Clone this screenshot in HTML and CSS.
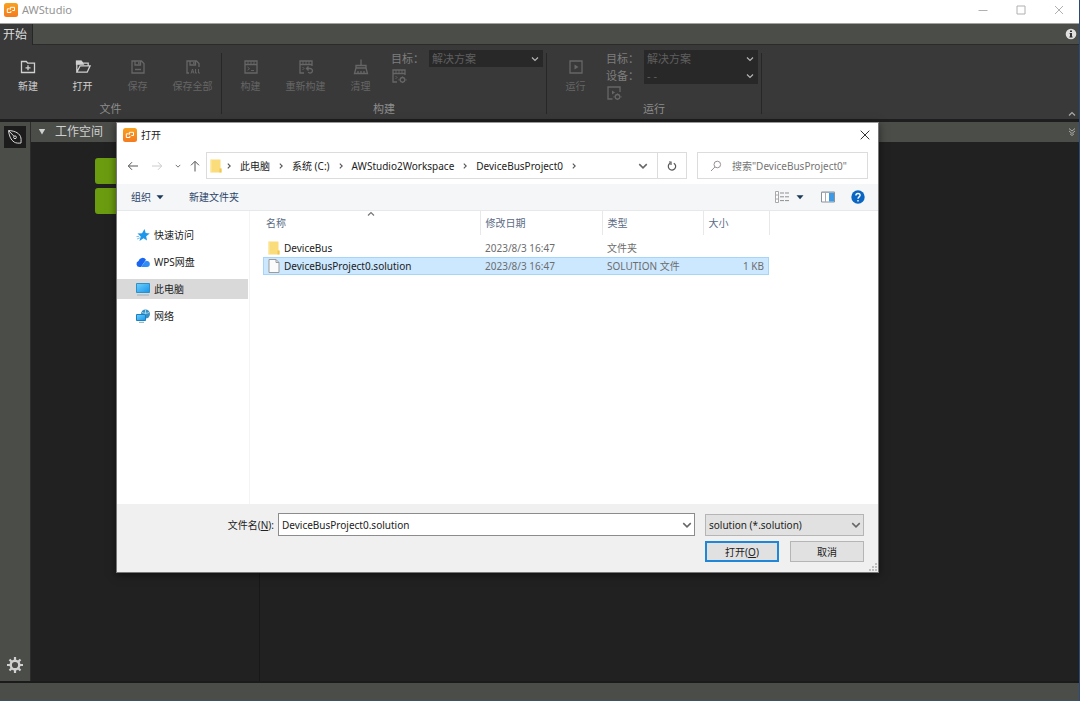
FILE: index.html
```html
<!DOCTYPE html>
<html lang="zh-CN">
<head>
<meta charset="utf-8">
<title>AWStudio</title>
<link rel="stylesheet" href="styles.css">
</head>
<body>
<svg class="defs" width="0" height="0" aria-hidden="true">
  <defs>
    <linearGradient id="orange" x1="0" y1="0" x2="0" y2="1"><stop offset="0" stop-color="#f9a11d"/><stop offset="1" stop-color="#f47b20"/></linearGradient>
    <linearGradient id="sky" x1="0" y1="0" x2="1" y2="1"><stop offset="0" stop-color="#6fd0fb"/><stop offset="1" stop-color="#1795ec"/></linearGradient>
  </defs>
  <symbol id="logo" viewBox="0 0 14 14"><rect width="14" height="14" rx="2.5" fill="url(#orange)"/><path d="M5.600 5.800H3.300v3.700h3.600V8M6.300 6.800V4.300h4.200v3.200H8.300" fill="none" stroke="#fff" stroke-width="1"/></symbol>
  <symbol id="chev" viewBox="0 0 8 8"><path d="M1 2.500l3 3 3-3" fill="none" stroke="currentColor" stroke-width="1.200"/></symbol>
  <symbol id="right" viewBox="0 0 8 8"><path d="M2.800 1.600L5.200 4 2.800 6.400" fill="none" stroke="currentColor" stroke-width="1.100"/></symbol>
  <symbol id="folder" viewBox="0 0 12 14"><path d="M.5.5h10v9h1v4H.5z" fill="#fbdc7b"/><path d="M9.500 9.500h2v4h-2z" fill="#f0c650"/><path d="M.5.5h1v13h-1z" fill="#fce9a6"/></symbol>
</svg>

<header class="titlebar">
  <svg class="i14"><use href="#logo"/></svg>
  <span class="titlebar-name">AWStudio</span>
  <button class="win-btn" aria-label="最小化"><svg class="i10" viewBox="0 0 10 10"><path d="M.5 5.500h9"/></svg></button>
  <button class="win-btn" aria-label="最大化"><svg class="i10" viewBox="0 0 10 10"><path d="M1 1h8v8H1z"/></svg></button>
  <button class="win-btn" aria-label="关闭"><svg class="i10" viewBox="0 0 10 10"><path d="M1 1l8 8M9 1L1 9"/></svg></button>
</header>

<nav class="tabs">
  <button class="tab">开始</button>
  <button class="info" aria-label="信息"><svg class="i12" viewBox="0 0 12 12"><circle cx="6" cy="6" r="5.300" fill="#e0e0e0"/><path d="M5 2.400h2v1.500H5zM4.600 5H7v3.600h.6v1H4.400v-1H5V6h-.4z" fill="#333"/></svg></button>
</nav>

<section class="ribbon">
  <div class="group">
    <div class="group-body">
      <button class="tool first on"><svg class="i16" viewBox="0 0 16 16"><path d="M1.500 2.500h4.800l1.400 1.700h6.800v9.300h-13zM8 6.300v5M5.500 8.800h5"/></svg>新建</button>
      <button class="tool on"><svg class="i16" viewBox="0 0 16 16"><path d="M1.800 13.200V2.500h4.400l1.400 1.700h5.600v2.500M1.800 13.200l3.300-6.400h10l-2.900 6.400z"/><path d="M1.500 2.200h4.700l2 3H1.500z" fill="currentColor"/></svg>打开</button>
      <button class="tool"><svg class="i16" viewBox="0 0 16 16"><path d="M2 2h9.500L14 4.500V14H2zM5 2v4h5.500V2M8.800 3v2M5 10.500h6"/></svg>保存</button>
      <button class="tool"><svg class="i16" viewBox="0 0 16 16"><path d="M4 14H2V2h9.500L14 4.500V8M5 2v4h5.500V2M8.800 3v2"/><path d="M6 14.500l1.500-4.500L9 14.500M6.500 13h2M10.500 10v4H12M13.500 10v4H15" stroke-width=".9"/></svg>保存全部</button>
    </div>
    <div class="group-name">文件</div>
  </div>
  <div class="group">
    <div class="group-body">
      <button class="tool"><svg class="i16" viewBox="0 0 16 16"><path d="M2 2h12v12H2zM2 5.500h12"/><path d="M5 2v3M8 2v3M11 2v3M4.500 8l2 1.600-2 1.600M8 11.500h3" stroke-width=".9"/></svg>构建</button>
      <button class="tool"><svg class="i16" viewBox="0 0 16 16"><path d="M6 14H2V2h12v5M2 5.500h12M9 9.500h3.200a2.300 2.300 0 1 1-2 3.500M10.500 7.500l-2 2 2 2"/><path d="M5 2v3M8 2v3M11 2v3M4.500 8l1.500 1.500-1.500 1.500" stroke-width=".9"/></svg>重新构建</button>
      <button class="tool"><svg class="i16" viewBox="0 0 16 16"><path d="M8 .5V6M3 9V6.500h10V9M3 9L1.500 14.500h13L13 9zM5 14.500V12M8 14.500V12M11 14.500V12"/></svg>清理</button>
      <div class="fields">
        <label for="t1">目标：</label>
        <div class="combo dark"><select id="t1"><option>解决方案</option></select><svg class="i8"><use href="#chev"/></svg></div>
        <button class="mini" aria-label="构建设置"><svg class="i16" viewBox="0 0 16 16"><path d="M6 14H2V2h12v5M2 5.500h12M11.500 8.500v1M11.500 14v1M8.500 11.800h-1M15.500 11.800h-1"/><path d="M5 2v3M8 2v3M11 2v3M4.500 8l1.500 1.500-1.500 1.500" stroke-width=".9"/><circle cx="11.500" cy="11.800" r="2.300"/></svg></button>
      </div>
    </div>
    <div class="group-name">构建</div>
  </div>
  <div class="group">
    <div class="group-body">
      <button class="tool"><svg class="i16" viewBox="0 0 16 16"><path d="M2 2h12v12H2z"/><path d="M6.500 5.500v5l4-2.500z" fill="currentColor" stroke="none"/></svg>运行</button>
      <div class="fields">
        <label for="t2">目标：</label>
        <div class="combo dark"><select id="t2"><option>解决方案</option></select><svg class="i8"><use href="#chev"/></svg></div>
        <label for="t3">设备：</label>
        <div class="combo dark"><select id="t3"><option>- -</option></select><svg class="i8"><use href="#chev"/></svg></div>
        <button class="mini" aria-label="运行设置"><svg class="i16" viewBox="0 0 16 16"><path d="M6.500 14H2V2h12v5M11.500 8.500v1M11.500 14v1M8.500 11.800h-1M15.500 11.800h-1"/><path d="M6 5.500v4l3-2z" fill="currentColor" stroke="none"/><circle cx="11.500" cy="11.800" r="2.300"/></svg></button>
      </div>
    </div>
    <div class="group-name">运行</div>
  </div>
  <button class="collapse" aria-label="折叠功能区"><svg class="i8 flip"><use href="#chev"/></svg></button>
</section>

<main class="work">
  <aside class="rail">
    <button class="pen" aria-label="设计"><svg class="i16" viewBox="0 0 16 16"><path d="M1.500 1.500C6 1.800 11.500 3 13.500 7.500c.8 2 .6 4 .5 6.500-2.500.3-5 .2-6.800-.9C3.500 11 2 6 1.500 1.500zM2 2l5 5.300"/><circle cx="8" cy="8.300" r="1.400"/></svg></button>
    <button class="gear" aria-label="设置"><svg class="i16" viewBox="0 0 16 16"><circle cx="8" cy="8" r="4.300" stroke-width="2.400"/><path d="M8 0v3M8 13v3M0 8h3M13 8h3M2.500 2.500l2 2M11.500 11.500l2 2M13.500 2.500l-2 2M4.500 11.500l-2 2" stroke-width="2.200"/></svg></button>
  </aside>
  <section class="panel">
    <h2 class="panel-head"><svg class="i8" viewBox="0 0 8 8"><path d="M.8 1h6.400L4 6.500z" fill="currentColor"/></svg>工作空间</h2>
    <div class="panel-body"><span class="green"></span><span class="green"></span></div>
  </section>
  <section class="canvas">
    <div class="panel-head end"><svg class="i8" viewBox="0 0 8 8"><path d="M1 .5l3 2.500L7 .5M1 3l3 2.500L7 3M2 5.800l2 1.700 2-1.700" fill="none" stroke="currentColor"/></svg></div>
  </section>
</main>
<footer class="status"></footer>

<div class="dialog" role="dialog" aria-labelledby="dlg">
  <div class="dlg-title">
    <svg class="i14"><use href="#logo"/></svg><span id="dlg">打开</span>
    <button class="plain close" aria-label="关闭"><svg class="i10" viewBox="0 0 10 10"><path d="M.7.7l8.600 8.600M9.300.7L.7 9.300"/></svg></button>
  </div>
  <div class="dlg-nav">
    <div class="arrows">
      <button class="plain" aria-label="后退"><svg class="i12" viewBox="0 0 12 12"><path d="M11 6H1.500M5 2.200L1.300 6 5 9.800"/></svg></button>
      <button class="plain faint" aria-label="前进"><svg class="i12" viewBox="0 0 12 12"><path d="M1 6h9.500M7 2.200L10.700 6 7 9.800"/></svg></button>
      <button class="plain recent" aria-label="历史"><svg class="i6"><use href="#chev"/></svg></button>
      <button class="plain" aria-label="向上"><svg class="i12" viewBox="0 0 12 12"><path d="M6 11.500V1.500M2 5.300l4-4 4 4"/></svg></button>
    </div>
    <div class="address">
      <svg class="fold"><use href="#folder"/></svg>
      <svg class="i8"><use href="#right"/></svg><a href="#">此电脑</a>
      <svg class="i8"><use href="#right"/></svg><a href="#">系统 (C:)</a>
      <svg class="i8"><use href="#right"/></svg><a href="#">AWStudio2Workspace</a>
      <svg class="i8"><use href="#right"/></svg><a href="#">DeviceBusProject0</a>
      <svg class="i8"><use href="#right"/></svg>
      <button class="plain drop" aria-label="以前的位置"><svg class="i10"><use href="#chev"/></svg></button>
      <button class="plain refresh" aria-label="刷新"><svg class="i10" viewBox="0 0 10 10"><path d="M6.800 2.200A3.700 3.700 0 1 1 3 2.300M2 1h2v3" stroke-width="1.200"/></svg></button>
    </div>
    <div class="search">
      <svg class="i12" viewBox="0 0 12 12"><circle cx="7.300" cy="4.500" r="3.300"/><path d="M4.900 7L1 11"/></svg>
      <input type="text" aria-label="搜索" placeholder='搜索"DeviceBusProject0"'>
    </div>
  </div>
  <div class="dlg-tools">
    <button class="plain org">组织<svg class="i8" viewBox="0 0 8 8"><path d="M.5 2.200h7L4 6.200z"/></svg></button>
    <button class="plain">新建文件夹</button>
    <div class="views">
      <button class="plain" aria-label="视图"><svg class="i14" viewBox="0 0 14 14"><path d="M.5 1.500h3v11h-3zM.5 5h3M.5 9h3" fill="#fff" stroke="#a8a8a8"/><path d="M5 3h4M5 6.800h4M5 10.600h4M10 3h4M10 6.800h4M10 10.600h4" stroke="#8f8f8f"/></svg></button>
      <button class="plain tri" aria-label="更多视图"><svg class="i8" viewBox="0 0 8 8"><path d="M.5 2.200h7L4 6.200z"/></svg></button>
      <button class="plain" aria-label="预览窗格"><svg class="i14" viewBox="0 0 14 14"><path d="M.5 2h13v10H.5z" fill="#fff" stroke="#8b939b"/><path d="M8 3h5v8.500H8z" fill="#3f9ae5"/><path d="M.5 2.500h13M4.500 3v9" stroke="#a4abb2"/></svg></button>
      <button class="plain" aria-label="帮助"><svg class="i14" viewBox="0 0 14 14"><circle cx="7" cy="7" r="6.700" fill="#0b66c3"/><path d="M4.900 5.500C4.900 2.800 9.100 2.800 9.100 5.300 9.100 6.900 7 6.900 7 8.700M7 9.900v1.500" fill="none" stroke="#fff" stroke-width="1.400"/></svg></button>
    </div>
  </div>
  <div class="dlg-main">
    <ul class="places">
      <li><a href="#"><svg class="i14" viewBox="0 0 14 14"><path d="M8.500 1l1.200 4 4 .6-3.500 2.600.8 4.300-3.500-2.200L3.500 13l1.200-4.500L1.500 5.500l4.500-.3z" fill="#1e97e8"/><path d="M1 11l3-1.200M.5 8.500h2.500" stroke="#79c3f3"/></svg>快速访问</a></li>
      <li><a href="#"><svg class="i14" viewBox="0 0 14 14"><path d="M3.500 12A3.100 3.100 0 0 1 2.500 6 4.100 4.100 0 0 1 10 4.800L5 12z" fill="#1b66f0"/><path d="M5 12L9 6.500a3 3 0 0 1 4.800 2.700A2.900 2.900 0 0 1 11 12z" fill="#2f8df8"/></svg>WPS网盘</a></li>
      <li><a href="#" class="current"><svg class="i14" viewBox="0 0 14 14"><path d="M.5 1.500h13v9H.5z" fill="url(#sky)" stroke="#2f8fc9"/><path d="M1 13h12" stroke="#9aaebb"/></svg>此电脑</a></li>
      <li><a href="#"><svg class="i14" viewBox="0 0 14 14"><circle cx="9.500" cy="5" r="4.500" fill="#3a8fc0"/><path d="M6 3.500c2 1 5 1 7 0M9.500.5v8" stroke="#9ed7f2" fill="none"/><path d="M.5 5.500h9v6h-9z" fill="url(#sky)" stroke="#1f7fbb"/><path d="M3 13.300h5" stroke="#8aa"/></svg>网络</a></li>
    </ul>
    <div class="files">
      <table>
        <colgroup><col class="c1"><col class="c2"><col class="c3"><col class="c4"></colgroup>
        <thead><tr><th>名称<svg class="sort i8 flip"><use href="#chev"/></svg></th><th>修改日期</th><th>类型</th><th>大小</th></tr></thead>
        <tbody>
          <tr><td><span class="name"><svg class="fold"><use href="#folder"/></svg>DeviceBus</span></td><td>2023/8/3 16:47</td><td>文件夹</td><td></td></tr>
          <tr class="sel"><td><span class="name"><svg class="fold" viewBox="0 0 12 14"><path d="M1 .5h7l3 3v10H1z" fill="#fbfbfb" stroke="#9b9b9b"/><path d="M8 .5v3h3" fill="none" stroke="#9b9b9b"/></svg>DeviceBusProject0.solution</span></td><td>2023/8/3 16:47</td><td>SOLUTION 文件</td><td>1 KB</td></tr>
        </tbody>
      </table>
    </div>
  </div>
  <form class="dlg-foot">
    <label for="fn">文件名(<u>N</u>):</label>
    <div class="combo white"><input id="fn" type="text" value="DeviceBusProject0.solution"><svg class="i10"><use href="#chev"/></svg></div>
    <div class="combo grey"><select aria-label="文件类型"><option>solution (*.solution)</option></select><svg class="i10"><use href="#chev"/></svg></div>
    <div class="actions">
      <button type="button" class="btn primary">打开(<u>O</u>)</button>
      <button type="button" class="btn">取消</button>
    </div>
    <svg class="grip" viewBox="0 0 8 8"><path d="M6 0h2v2H6zM6 3h2v2H6zM3 3h2v2H3zM6 6h2v2H6zM3 6h2v2H3zM0 6h2v2H0z" fill="#bfbfbf"/></svg>
  </form>
</div>
</body>
</html>
```
FILE: styles.css
```css
* { box-sizing: border-box; }
body {
  margin: 0;
  min-height: 100vh;
  display: flex;
  flex-direction: column;
  position: relative;
  background: #212121;
  border-right: 1px solid #2d4a78;
  font: 10px/14px "Noto Sans", "Noto Sans CJK SC", sans-serif;
}
button, input, select { font: inherit; color: inherit; margin: 0; padding: 0; border: 0; background: none; outline: 0; }
a { color: inherit; text-decoration: none; }
svg { flex: none; display: block; fill: none; }
.defs { position: absolute; }
.i6 { width: 6px; height: 6px; }
.i8 { width: 8px; height: 8px; }
.i10 { width: 10px; height: 10px; }
.i12 { width: 12px; height: 12px; }
.i14 { width: 14px; height: 14px; }
.i16 { width: 16px; height: 16px; }
.flip { transform: scaleY(-1); }

.titlebar { display: flex; align-items: center; height: 24px; padding: 0 1px 3px 4px; background: #fff; color: #949494; border-bottom: 1px solid #a2a3a1; }
.titlebar-name { margin: 0 auto 0 4px; font-size: 11px; }
.win-btn { width: 38px; display: flex; justify-content: center; stroke: #b0b0b0; }

.tabs { display: flex; justify-content: space-between; height: 21px; background: #4b4d49; border-bottom: 1px solid #2b2b2b; }
.tab { padding: 1px 5px 0 3px; margin-bottom: -1px; background: #393939; color: #dcdcdc; font-size: 12px; border-right: 1px solid #262626; }
.info { padding: 0 2px; }

.ribbon { display: flex; height: 77px; background: #393939; color: #666; border-bottom: 3px solid #1d1e1d; }
.group { display: flex; flex-direction: column; justify-content: space-between; padding: 5px 2px 3px 1px; position: relative; }
.group::after { content: ""; position: absolute; right: 0; top: 8px; bottom: 5px; width: 1px; background: #272727; }
.group-body { display: flex; }
.group-name { font-size: 11px; text-align: center; color: #8c8c8c; }
.tool { width: 55px; padding-top: 9px; display: flex; flex-direction: column; align-items: center; gap: 4px; white-space: nowrap; }
.tool.first { width: 54px; }
.tool svg, .mini svg { stroke: currentColor; stroke-width: 1.3; }
.tool.on { color: #d0d0d0; }
.fields { display: grid; grid-template-columns: 38px 114px; grid-auto-rows: 17px; align-items: center; padding-left: 3px; margin-right: 2px; color: #7e7e7e; font-size: 11px; height: 51px; }
.mini { width: 16px; color: #666; }
.collapse { margin: auto 3px 1px auto; color: #aaa; }

.combo { display: flex; align-items: center; position: relative; }
.combo > svg { position: absolute; right: 4px; pointer-events: none; }
.combo select, .combo input { width: 100%; height: 100%; appearance: none; padding: 0 16px 0 3px; }
.combo.dark { height: 17px; background: #282828; color: #5f5f5f; }
.combo.dark svg { color: #b5b5b5; }

.work { flex: 1; display: flex; }
.rail { width: 31px; padding: 4px 4px 8px; display: flex; flex-direction: column; justify-content: space-between; align-items: center; background: #4b4d49; border-right: 1px solid #2c2d2b; }
.pen { width: 22px; height: 22px; display: grid; place-items: center; background: #1c1c1c; stroke: #d8d8d8; }
.gear { stroke: #d0d0d0; }
.panel { width: 229px; border-right: 1px solid #181818; }
.panel-head { margin: 0; height: 20px; padding: 0 7px; display: flex; align-items: center; gap: 9px; background: #4b4d49; color: #d0d0d0; font-size: 12px; font-weight: 400; }
.end { justify-content: flex-end; padding: 0 3px; color: #aaa; }
.panel-body { display: flex; flex-direction: column; align-items: center; gap: 4px; padding-top: 16px; }
.green { width: 100px; height: 26px; border-radius: 3px; background: #6b9c10; }
.canvas { flex: 1; }
.status { height: 20px; background: #4b4d49; border-top: 2px solid #1b1b1b; border-bottom: 1px solid #3c5364; }

.dialog { position: absolute; left: 116px; right: 200px; top: 122px; background: #fff; color: #222; border: 1px solid #777; border-top-color: #999; box-shadow: 0 2px 8px rgba(0, 0, 0, .5); }
.plain { display: flex; align-items: center; }
.dlg-title { display: flex; align-items: center; gap: 4px; height: 29px; padding: 0 8px 6px 6px; }
.close { margin-left: auto; stroke: #333; }
.dlg-nav { display: flex; padding: 0 10px 5px 10px; color: #222; }
.arrows { display: flex; align-items: center; gap: 12px; width: 79px; color: #666; stroke: #555; }
.arrows .faint { stroke: #ccc; }
.arrows .recent { margin-right: -4px; }
.address { flex: 1; display: flex; align-items: center; gap: 7px; height: 27px; padding-left: 3px; border: 1px solid #dcdcdc; white-space: nowrap; }
.address .i8 { color: #555; }
.fold { width: 12px; height: 14px; }
.address .fold { margin-right: -4px; }
.drop { margin-left: auto; padding-right: 2px; color: #666; }
.refresh { align-self: stretch; padding: 0 9px; border-left: 1px solid #dcdcdc; stroke: #555; }
.search { display: flex; align-items: center; gap: 10px; width: 171px; margin-left: 10px; padding-left: 12px; border: 1px solid #dcdcdc; }
.search svg { stroke: #9a8f96; }
.search input { width: 100%; }
.search input::placeholder { color: #757575; opacity: 1; }
.dlg-tools { display: flex; align-items: center; gap: 25px; height: 27px; padding: 0 13px 0 14px; background: #f4f6f8; color: #2b4468; border-bottom: 1px solid #e6e8ea; }
.org { gap: 5px; }
.org svg, .tri svg { fill: #1e395b; }
.views { display: flex; gap: 16px; margin-left: auto; }
.tri { margin: 0 1px 0 -9px; }
.dlg-main { display: flex; min-height: 293px; }
.places { list-style: none; width: 133px; margin: 0; padding: 14px 1px 0 0; border-right: 1px solid #f4f4f4; display: flex; flex-direction: column; gap: 7px; }
.places a { display: flex; align-items: center; gap: 4px; height: 20px; padding-left: 19px; }
.places .current { background: #d9d9d9; }
.files { flex: 1; padding-left: 13px; }
table { border-collapse: collapse; table-layout: fixed; width: 506px; text-align: left; color: #6d6d6d; }
.c1 { width: 217px; } .c2 { width: 122px; } .c3 { width: 101px; } .c4 { width: 66px; }
th { height: 24px; padding: 0 5px 0 5px; font-weight: 400; color: #5a6b84; border-right: 1px solid #e8e8e8; position: relative; }
th:first-child { padding-left: 3px; }
.sort { position: absolute; top: -1px; left: 104px; color: #777; }
thead::after { content: ""; display: block; height: 4px; }
td { height: 18px; padding: 0 5px; line-height: 14px; }
td:last-child { text-align: right; }
.name { display: flex; align-items: center; gap: 4px; color: #222; }
.sel { background: #cce8ff; outline: 1px solid #a6d5fa; outline-offset: -1px; }
.dlg-foot { display: grid; grid-template-columns: 161px 1fr 159px; row-gap: 5px; align-items: center; padding: 9px 14px 10px 0; background: #f0f0f0; position: relative; }
.dlg-foot label { text-align: right; padding-right: 4px; }
.combo.white { height: 23px; background: #fff; border: 1px solid #8c8c8c; margin-right: 10px; }
.combo.grey { height: 22px; background: #e1e1e1; border: 1px solid #b5b5b5; }
.combo.white svg, .combo.grey svg { color: #666; right: 2px; }
.actions { grid-column: 3; display: grid; grid-template-columns: 1fr 1fr; gap: 11px; }
.btn { height: 21px; background: #e1e1e1; border: 1px solid #b5b5b5; }
.primary { border: 2px solid #1f86d8; }
.grip { position: absolute; right: 1px; bottom: 1px; width: 8px; height: 8px; }
```
